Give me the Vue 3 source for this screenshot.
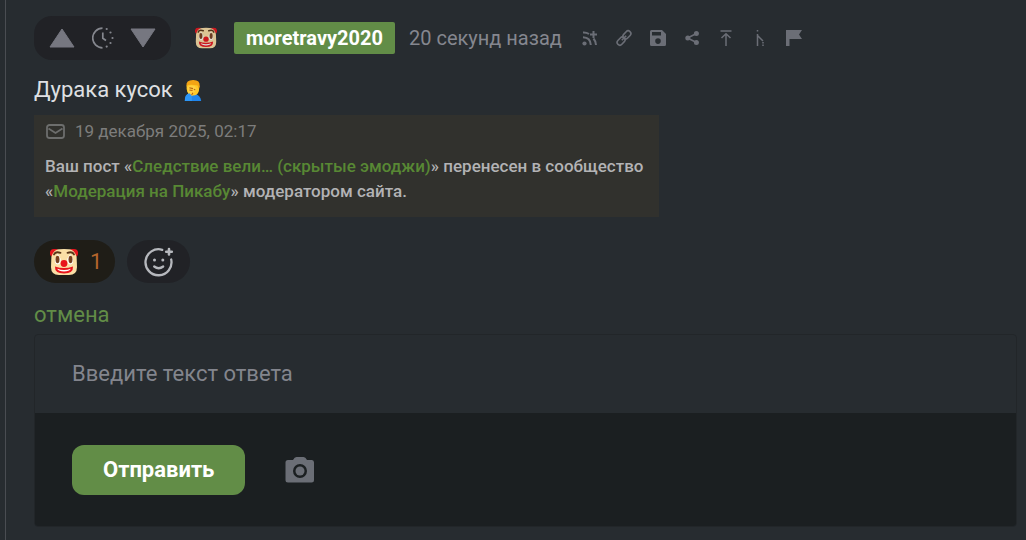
<script setup>
import { ref } from 'vue'

const reply = ref('')
const tools = [
  { id: 'follow', label: 'Подписаться на ветку' },
  { id: 'link', label: 'Ссылка' },
  { id: 'save', label: 'Сохранить' },
  { id: 'share', label: 'Поделиться' },
  { id: 'top', label: 'К началу ветки' },
  { id: 'branch', label: 'Показать ветку' },
  { id: 'flag', label: 'Пожаловаться' },
]
</script>

<template>
  <main class="thread">
    <svg class="defs" width="0" height="0" aria-hidden="true">
      <symbol id="clown" viewBox="0 0 28 28">
        <path d="M5 1.500Q14 .3 23 1.500Q26 2 26.500 6L27 19Q27 27 19 27H9Q1 27 1 19L1.500 6Q2 2 5 1.500Z" fill="#fbdfa6" />
        <path d="M0 4Q.5 .8 4.500 1L8 1.300Q3 3 1.500 8.500Q-.3 7.500 0 4ZM28 4Q27.500 .8 23.500 1L20 1.300Q25 3 26.500 8.500Q28.300 7.500 28 4Z" fill="#e8141c" />
        <path d="M4 6.500Q5.500 3 10.500 4.800M24 6.500Q22.500 3 17.500 4.800" fill="none" stroke="#593518" stroke-width="1.900" stroke-linecap="round" />
        <path d="M7.800 6L10.800 11Q11 16 7.800 16.500Q4.200 16 5 11ZM20.200 6L23 11Q23.800 16 20.200 16.500Q17 16 17.200 11Z" fill="#fff" />
        <ellipse cx="7.500" cy="11.500" rx="2" ry="3.800" fill="#79401f" />
        <ellipse cx="20.500" cy="11.500" rx="2" ry="3.800" fill="#79401f" />
        <path d="M5 18.500Q14 21.500 23 18.500Q23.500 25.500 14 25.500Q4.500 25.500 5 18.500Z" fill="#e8141c" />
        <path d="M7.200 20.800Q14 23.300 20.800 20.800Q19.500 23.500 14 23.500Q8.500 23.500 7.200 20.800Z" fill="#fff" />
        <circle cx="14" cy="15.500" r="3.400" fill="#e8141c" />
      </symbol>
    </svg>

    <article class="comment">
      <header class="head">
        <div class="votes">
          <button class="plain" type="button" aria-label="Плюс">
            <svg width="26" height="20" viewBox="0 0 26 20"><path d="M13 1L25 19H1Z" class="tri" /></svg>
          </button>
          <svg width="22" height="22" viewBox="0 0 22 22" aria-hidden="true">
            <path d="M10.500 1.200A9.800 9.800 0 0 0 10.500 20.800" fill="none" stroke="#85878e" stroke-width="1.700" />
            <path d="M10.800 5.500V11.300L14 13.500" fill="none" stroke="#85878e" stroke-width="1.700" />
            <g fill="#85878e"><circle cx="14.700" cy="2" r="1.100" /><circle cx="18.500" cy="5.500" r="1.100" /><circle cx="20.500" cy="11" r="1.100" /><circle cx="18.500" cy="16" r="1.100" /><circle cx="14.700" cy="19.600" r="1.100" /></g>
          </svg>
          <button class="plain" type="button" aria-label="Минус">
            <svg width="26" height="20" viewBox="0 0 26 20"><path d="M1 1H25L13 19Z" class="tri" /></svg>
          </button>
        </div>
        <span class="avatar"><svg width="22" height="22"><use href="#clown" /></svg></span>
        <a class="author" href="#author">moretravy2020</a>
        <time class="ago">20 секунд назад</time>
        <nav class="tools" aria-label="Действия">
          <button v-for="t in tools" :key="t.id" class="plain" type="button" :aria-label="t.label">
            <svg width="18" height="18" viewBox="0 0 18 18">
              <g v-if="t.id === 'follow'" fill="none" stroke="#6b6e76" stroke-width="2">
                <circle cx="3.500" cy="14.500" r="2.100" fill="#6b6e76" stroke="none" />
                <path d="M2 8.200Q9.500 8.500 9.800 16M2 3.500Q5.500 3.300 8 5M12.500 9.500Q15 12.500 15 16" />
                <path d="M12.500 2V9M9 5.500H16" />
              </g>
              <g v-else-if="t.id === 'link'" fill="none" stroke="#6b6e76" stroke-width="1.600">
                <rect x="7.400" y="3.200" width="9" height="5.400" rx="2.700" transform="rotate(-47 11.900 5.900)" />
                <rect x="1.600" y="9.400" width="9" height="5.400" rx="2.700" transform="rotate(-47 6.100 12.100)" />
                <path d="M6.800 11.200L11.200 6.800" />
              </g>
              <path v-else-if="t.id === 'save'" fill="#6b6e76" fill-rule="evenodd" d="M2.500 1H13L17 5V15.500Q17 17 15.500 17H2.500Q1 17 1 15.500V2.500Q1 1 2.500 1ZM3 3V6.500H12V3ZM9 9.300A2.800 2.800 0 1 0 9 14.900A2.800 2.800 0 1 0 9 9.300Z" />
              <g v-else-if="t.id === 'share'" fill="#6b6e76">
                <path d="M13.500 4.500L4.500 9L13.500 13.500" fill="none" stroke="#6b6e76" stroke-width="1.600" />
                <circle cx="13.400" cy="4.500" r="2.500" /><circle cx="4.800" cy="9" r="2.500" /><circle cx="13.400" cy="13.500" r="2.500" />
              </g>
              <path v-else-if="t.id === 'top'" fill="none" stroke="#6b6e76" stroke-width="1.500" d="M3.500 2H14.500M9 17V5M4.500 9L9 4.700L13.500 9" />
              <g v-else-if="t.id === 'branch'" fill="none" stroke="#6b6e76" stroke-width="1.500">
                <path d="M6.500 5V17M6.500 6.500L12 12" />
                <path d="M6.500 1V3.500M12 13V17" stroke-dasharray="1.500 1" />
              </g>
              <path v-else fill="#6b6e76" d="M1 1H17L14 5.500L17 10H4.500V17H1Z" />
            </svg>
          </button>
        </nav>
      </header>

      <p class="text">
        Дурака кусок
        <svg width="20" height="24" viewBox="0 0 22 24" role="img" aria-label="facepalm">
          <path d="M2 24Q1.500 17 7 15.500L14 16.500Q19 18 20 24Z" fill="#1f86ee" />
          <path d="M4 8Q4.500 2.500 11 2.500Q17.500 2.500 18 8L17.500 13Q16 18 11 18Q4.500 17.500 4 11Z" fill="#ffc928" />
          <path d="M3.800 8Q3 1 11 1Q19 .8 18.300 8L17.500 11L16 7Q10 6 6 6.500Z" fill="#f3a414" />
          <path d="M5 9Q8 5.500 13 8L15 11L12 15L10 19L6 17Z" fill="#ffd044" />
          <path d="M7 9.500L11 10.500M7 12L10.500 12.500M12 11L13.500 12M11 15L9.500 17.500" fill="none" stroke="#b9650f" stroke-width="1.200" />
          <path d="M2 24Q2 17 7 15.500L9.500 18L10 24Z" fill="#2d96f6" />
        </svg>
      </p>

      <section class="notice">
        <div class="date">
          <svg width="20" height="16" viewBox="0 0 20 16" fill="none" stroke="#6d6e6d" stroke-width="1.800" aria-hidden="true">
            <rect x="2" y="1" width="17" height="13" rx="2.500" /><path d="M3.500 4.500L10.500 9L17.500 4.500" />
          </svg>
          <time>19 декабря 2025, 02:17</time>
        </div>
        <p class="message"><span>Ваш пост «</span><a href="#post">Следствие вели… (скрытые эмоджи)</a><span>» перенесен в сообщество </span><br><span>«</span><a href="#community">Модерация на Пикабу</a><span>» модератором сайта.</span></p>
      </section>

      <div class="reactions">
        <button class="pill own" type="button"><svg width="28" height="28" aria-hidden="true"><use href="#clown" /></svg><span>1</span></button>
        <button class="pill" type="button" aria-label="Добавить реакцию">
          <svg width="31" height="30" viewBox="0 0 31 30" fill="none" stroke="#b6b8bd" stroke-width="2.300" stroke-linecap="round">
            <path d="M19.200 2.800A13 13 0 1 0 28.200 12.500" />
            <path d="M11.200 19.500Q15.700 23 20.200 19.500" />
            <path d="M26 2V7.500M23.200 4.700H28.800" stroke-width="2.600" />
            <g fill="#b6b8bd" stroke="none"><circle cx="11.500" cy="13" r="1.500" /><circle cx="19.800" cy="13" r="1.500" /></g>
          </svg>
        </button>
      </div>

      <button class="plain cancel" type="button">отмена</button>

      <form class="editor" @submit.prevent>
        <textarea v-model="reply" rows="1" aria-label="Текст ответа" placeholder="Введите текст ответа"></textarea>
        <div class="bar">
          <button class="send" type="submit">Отправить</button>
          <button class="plain" type="button" aria-label="Добавить фото">
            <svg width="30" height="26" viewBox="0 0 30 26" fill="#6b6e76">
              <path fill-rule="evenodd" d="M3 3H8Q9.500 0 11.500 0H18.500Q20.500 0 22 3H27Q29 3 29 5.500V23Q29 25.500 26.500 25.500H3Q.5 25.500 .5 23V5.500Q.5 3 3 3ZM15 7A7 7 0 1 0 15 21A7 7 0 1 0 15 7Z" />
              <circle cx="15" cy="14" r="4.500" />
            </svg>
          </button>
        </div>
      </form>
    </article>
  </main>
</template>

<style>
body {
  background: #272c30;
}
</style>

<style scoped>
.thread {
  min-height: 100vh;
  box-sizing: border-box;
  padding: 16px 9px 0 5px;
  color: #dfe0e3;
  font: 22px/28px Roboto, "Liberation Sans", sans-serif;
  background: linear-gradient(#4a4d52, #4a4d52) 5px 0 / 1px 100% no-repeat;
}
.defs {
  position: absolute;
}
.comment {
  padding-left: 29px;
}
button {
  font: inherit;
  cursor: pointer;
}
svg {
  display: block;
}
.plain {
  padding: 0;
  border: 0;
  background: none;
}
.head {
  display: flex;
  align-items: center;
}
.votes {
  display: flex;
  align-items: center;
  justify-content: space-between;
  box-sizing: border-box;
  width: 137px;
  height: 44px;
  padding: 0 15px;
  border-radius: 18px;
  background: #212226;
}
.tri {
  fill: #767780;
  stroke: #767780;
  stroke-linejoin: round;
}
.avatar {
  margin: 0 17px 0 24px;
  opacity: 0.85;
}
.author {
  padding: 2px 12px;
  border-radius: 2px;
  background: #628d47;
  color: #fff;
  font-size: 20px;
  font-weight: 700;
  text-decoration: none;
}
.ago {
  margin-left: 14px;
  color: #85878f;
  font-size: 20px;
}
.tools {
  display: flex;
  gap: 16px;
  margin-left: 19px;
}
.text {
  display: flex;
  align-items: center;
  gap: 10px;
  margin: 16px 0 11px;
}
.notice {
  box-sizing: border-box;
  width: 625px;
  max-width: 100%;
  min-height: 102px;
  padding: 4px 11px;
  background: #31312d;
  color: #b3b3b5;
  font-size: 17px;
  font-weight: 500;
  line-height: 25px;
}
.date {
  display: flex;
  align-items: center;
  gap: 10px;
  color: #7d7d7c;
  font-weight: 400;
}
.message {
  margin: 10px 0 0;
}
.message a {
  color: #588834;
  text-decoration: none;
}
.reactions {
  display: flex;
  gap: 12px;
  margin-top: 23px;
}
.pill {
  display: flex;
  align-items: center;
  gap: 12px;
  height: 43px;
  padding: 0 16px;
  border: 0;
  border-radius: 22px;
  background: #212226;
}
.own {
  padding: 0 13px 0 16px;
  background: #1f1d17;
  color: #b5652c;
}
.cancel {
  display: block;
  margin: 18px 0 5px;
  color: #628d47;
}
.editor {
  border: 1px solid #222629;
  border-radius: 4px;
  overflow: hidden;
}
textarea {
  display: block;
  box-sizing: border-box;
  width: 100%;
  height: 78px;
  padding: 25px 37px;
  border: 0;
  outline: 0;
  resize: none;
  overflow: hidden;
  background: transparent;
  color: inherit;
  font: inherit;
}
textarea::placeholder {
  color: #83858d;
  opacity: 1;
}
.bar {
  display: flex;
  align-items: center;
  gap: 40px;
  padding: 32px 37px 31px;
  background: #1b1f21;
}
.send {
  height: 50px;
  padding: 0 31px;
  border: 0;
  border-radius: 12px;
  background: #628d47;
  color: #fff;
  font-weight: 700;
}
</style>
